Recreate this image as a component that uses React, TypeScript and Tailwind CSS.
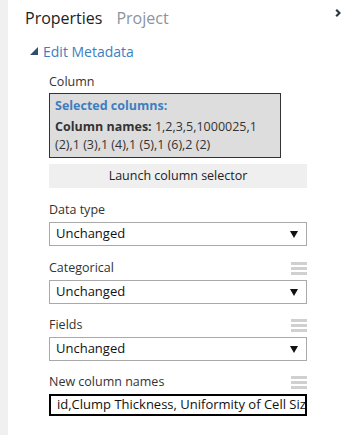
import React from "react";

const font = { fontFamily: '"Open Sans", "Noto Sans", sans-serif' };

function Hamburger() {
  return (
    <div className="flex flex-col gap-[2px] w-[16px]">
      <div className="h-[3px] bg-[#d0d0d0]" />
      <div className="h-[3px] bg-[#d0d0d0]" />
      <div className="h-[3px] bg-[#d0d0d0]" />
    </div>
  );
}

function Select({ value }: { value: string }) {
  return (
    <div className="h-[24px] border border-[#a9a9a9] bg-white flex items-center justify-between pl-[6px] pr-[8px]">
      <span className="text-[13px] text-[#111]">{value}</span>
      <svg width="8" height="7" viewBox="0 0 8 7">
        <path d="M0 0 H8 L4 7 Z" fill="#111" />
      </svg>
    </div>
  );
}

function Label({ text, menu }: { text: string; menu?: boolean }) {
  return (
    <div className="flex items-center justify-between h-[18px] mb-[3px]">
      <span className="text-[12.5px] text-[#333]">{text}</span>
      {menu && <Hamburger />}
    </div>
  );
}

export default function App() {
  return (
    <div className="w-[354px] h-[435px] flex bg-white overflow-hidden" style={font}>
      <div className="w-[8px] bg-[#f0f0f0] shrink-0" />
      <div className="flex-1 relative">
        <div className="absolute right-[13px] top-[9px]">
          <svg width="6" height="8" viewBox="0 0 6 8">
            <path d="M1.2 0.8 L4.5 4 L1.2 7.2" stroke="#2f3742" strokeWidth="2.2" fill="none" />
          </svg>
        </div>
        <div className="flex items-end gap-[14px] pl-[17px] pt-[3px] h-[30px]">
          <span className="text-[16px] text-[#222]">Properties</span>
          <span className="text-[16px] text-[#8c939b]">Project</span>
        </div>
        <div className="flex items-center pl-[22px] mt-[11px] h-[20px]">
          <svg width="8" height="8" viewBox="0 0 8 8" className="mr-[5px]">
            <path d="M0 8 L8 8 L8 0 Z" fill="#2f4f6f" />
          </svg>
          <span className="text-[14px] text-[#3d7ebf]">Edit Metadata</span>
        </div>
        <div className="pl-[41px] w-[299px] mt-[12px]">
          <div className="text-[12.5px] text-[#333] h-[18px] mb-[2px] flex items-center">Column</div>
          <div className="w-[232px] h-[65px] border border-[#333] bg-[#dddddd] px-[5px] pt-[3px] text-[12.5px] leading-[18px]">
            <div className="font-bold text-[#3d7ebf]">Selected columns:</div>
            <div className="text-[#333] mt-[3px]">
              <span className="font-bold">Column names:</span> 1,2,3,5,1000025,1 (2),1 (3),1 (4),1 (5),1 (6),2 (2)
            </div>
          </div>
          <div className="h-[24px] mt-[6px] bg-[#efefef] flex items-center justify-center text-[12.5px] text-[#222]">
            Launch column selector
          </div>
          <div className="mt-[13px]">
            <Label text="Data type" />
            <Select value="Unchanged" />
          </div>
          <div className="mt-[13px]">
            <Label text="Categorical" menu />
            <Select value="Unchanged" />
          </div>
          <div className="mt-[12px]">
            <Label text="Fields" menu />
            <Select value="Unchanged" />
          </div>
          <div className="mt-[12px]">
            <Label text="New column names" menu />
            <div className="h-[22px] mt-[3px] border-2 border-black bg-white flex items-center pl-[6px] overflow-hidden whitespace-nowrap">
              <span className="text-[13px] text-[#111]">id,Clump Thickness, Uniformity of Cell Size</span>
            </div>
          </div>
        </div>
      </div>
    </div>
  );
}
